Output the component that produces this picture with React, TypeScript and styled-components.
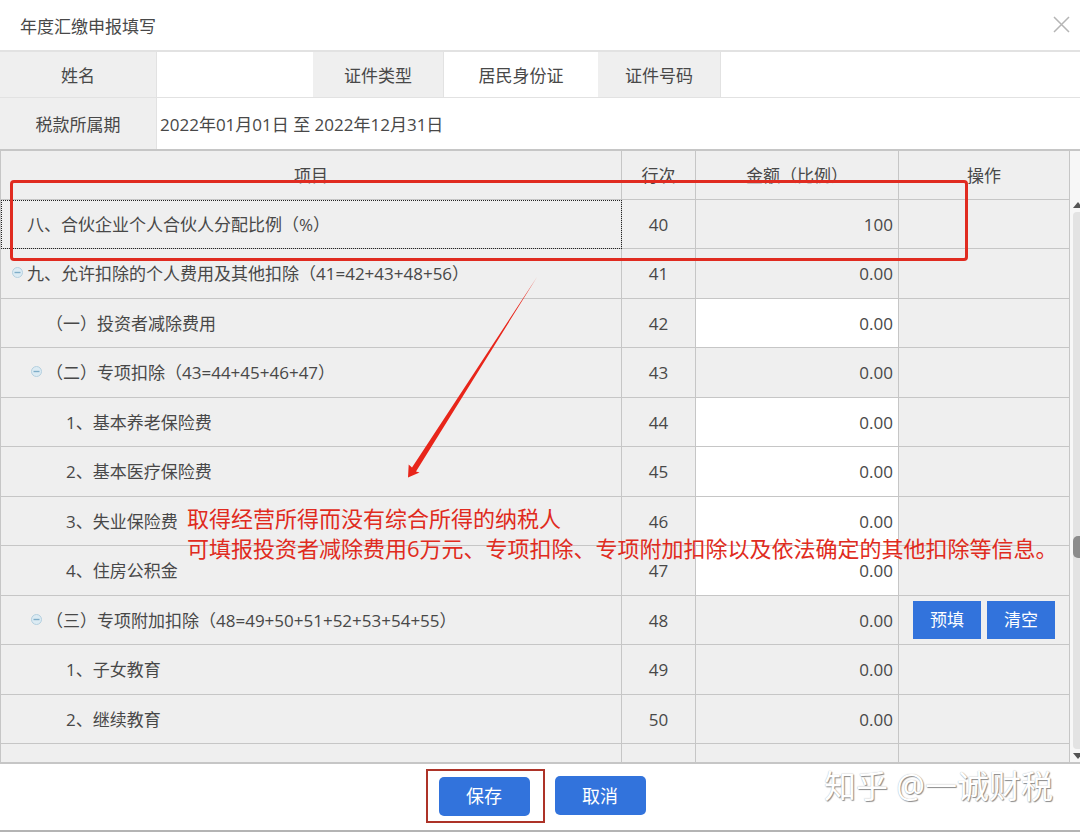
import React from "react";
import styled, { createGlobalStyle } from "styled-components";

const GlobalStyle = createGlobalStyle`
  *, *::before, *::after { box-sizing: border-box; }
  body {
    margin: 0;
    background: #fff;
    color: #484848;
    font: 17px/24px "Open Sans", "Noto Sans CJK SC", sans-serif;
  }
  button, input { font: inherit; color: inherit; }
`;

const line = "#c6c6c6";
const softLine = "#e2e2e2";
const panel = "#efefef";
const red = "#e02b20";

const Dialog = styled.main`
  position: relative;
  display: flex;
  flex-direction: column;
  height: 100vh;
  min-height: 400px;
  overflow: hidden;
  border-bottom: 2px solid #b4b4b4;
`;

const TitleBar = styled.header`
  display: flex;
  flex: none;
  align-items: center;
  justify-content: space-between;
  height: 52px;
  padding: 0 10px 0 20px;
  border-bottom: 2px solid ${softLine};
`;

const Title = styled.h1`
  margin: 0;
  padding-top: 4px;
  font-size: 17px;
  font-weight: 400;
`;

const CloseButton = styled.button`
  display: flex;
  padding: 0 0 2px;
  border: 0;
  background: none;
  color: #b5b5b5;
`;

const Info = styled.dl`
  display: grid;
  flex: none;
  grid-template-columns: 157px 156px 131px 154px 123px 1fr;
  margin: 0;
`;

const InfoLabel = styled.dt<{ $tall?: boolean }>`
  display: flex;
  align-items: center;
  justify-content: center;
  height: ${(p) => (p.$tall ? 51 : 46)}px;
  padding-top: 2px;
  border-right: 1px solid ${softLine};
  border-bottom: ${(p) => (p.$tall ? 0 : 1)}px solid ${softLine};
  background: ${panel};
`;

const InfoValue = styled.dd<{ $wide?: boolean }>`
  display: flex;
  align-items: center;
  justify-content: ${(p) => (p.$wide ? "flex-start" : "center")};
  margin: 0;
  padding: 2px 3px 0;
  grid-column: ${(p) => (p.$wide ? "span 5" : "auto")};
  border-bottom: ${(p) => (p.$wide ? 0 : 1)}px solid ${softLine};
`;

const Sheet = styled.section`
  position: relative;
  display: flex;
  flex: 1;
  min-height: 0;
  border-top: 2px solid ${line};
  border-bottom: 2px solid ${line};
`;

const TableClip = styled.div`
  flex: 1;
  overflow: hidden;
  background: ${panel};
`;

const Table = styled.table`
  width: 100%;
  table-layout: fixed;
  border-collapse: separate;
  border-spacing: 0;
  border-left: 1px solid ${line};
`;

const Col = styled.col<{ $w?: number }>`
  width: ${(p) => (p.$w ? `${p.$w}px` : "auto")};
`;

const Th = styled.th`
  height: 49px;
  padding: 2px 0 0;
  border-right: 1px solid ${line};
  border-bottom: 1px solid ${line};
  font-weight: 400;
`;

const Row = styled.tr`
  height: 49px;
  &:nth-child(even) { height: 50px; }
`;

const Cell = styled.td<{ $align?: string; $editable?: boolean }>`
  padding: 1px 5px 0;
  border-right: 1px solid ${line};
  border-bottom: 1px solid ${line};
  background: ${(p) => (p.$editable ? "#fff" : "transparent")};
  text-align: ${(p) => p.$align || "left"};
`;

const indents = [26, 45, 65];

const NameCell = styled(Cell)<{ $level: number; $focused?: boolean }>`
  position: relative;
  padding-left: ${(p) => indents[p.$level]}px;
  outline: ${(p) => (p.$focused ? "1px dotted #222" : "none")};
  outline-offset: -1px;
`;

const Toggle = styled.button<{ $level: number }>`
  position: absolute;
  left: ${(p) => (p.$level ? 29 : 10)}px;
  top: 17px;
  display: flex;
  padding: 0;
  border: 0;
  background: none;
`;

const AmountInput = styled.input`
  display: block;
  width: 100%;
  padding: 0;
  border: 0;
  outline: 0;
  background: transparent;
  text-align: right;
`;

const Actions = styled.div`
  display: flex;
  justify-content: center;
  gap: 6px;
  padding-bottom: 2px;
`;

const ActionButton = styled.button`
  width: 68px;
  height: 38px;
  padding: 0;
  border: 0;
  background: #3273dc;
  color: #fff;
`;

const Scrollbar = styled.div`
  display: flex;
  flex: none;
  flex-direction: column;
  width: 10px;
  padding: 51px 0 3px 3px;
  background: #f7f7f7;
`;

const Track = styled.div`
  display: flex;
  flex: 1;
  align-items: center;
  margin: 4px 0;
  border-radius: 4px 0 0 4px;
  background: #e3e3e3;
`;

const Thumb = styled.div`
  width: 100%;
  height: 22px;
  margin-top: 132px;
  border-radius: 5px 0 0 5px;
  background: #8c8c8c;
`;

const Footer = styled.footer`
  display: flex;
  flex: none;
  align-items: center;
  justify-content: center;
  gap: 10px;
  height: 66px;
  padding: 0 9px 3px 0;
`;

const SaveFrame = styled.div`
  padding: 6px 13px 5px 11px;
  border: 2px solid #ad3328;
`;

const FooterButton = styled.button`
  display: block;
  width: 91px;
  height: 39px;
  padding: 0;
  border: 0;
  border-radius: 5px;
  background: #3273dc;
  color: #fff;
  font-size: 18px;
`;

const HighlightFrame = styled.div`
  position: absolute;
  top: 29px;
  right: 112px;
  left: 10px;
  height: 81px;
  border: 3px solid ${red};
  border-radius: 4px;
  pointer-events: none;
`;

const Arrow = styled.svg`
  position: absolute;
  top: 126px;
  left: 406px;
  pointer-events: none;
`;

const Note = styled.p`
  position: absolute;
  top: 352px;
  left: 187px;
  margin: 0;
  color: ${red};
  font-size: 22px;
  line-height: 30px;
  white-space: nowrap;
  pointer-events: none;
`;

const Watermark = styled.div`
  position: absolute;
  right: 27px;
  bottom: 22px;
  color: #fff;
  font-size: 32px;
  line-height: 44px;
  text-shadow: 1px 1px 1px #8a8a8a, 0 0 1px #aaa;
`;

type Item = {
  no: number;
  name: string;
  level: number;
  amount?: string;
  parent?: boolean;
  editable?: boolean;
  actions?: string[];
};

const items: Item[] = [
  { no: 40, name: "八、合伙企业个人合伙人分配比例（%）", level: 0, amount: "100" },
  { no: 41, name: "九、允许扣除的个人费用及其他扣除（41=42+43+48+56）", level: 0, parent: true },
  { no: 42, name: "（一）投资者减除费用", level: 1, editable: true },
  { no: 43, name: "（二）专项扣除（43=44+45+46+47）", level: 1, parent: true },
  { no: 44, name: "1、基本养老保险费", level: 2, editable: true },
  { no: 45, name: "2、基本医疗保险费", level: 2, editable: true },
  { no: 46, name: "3、失业保险费", level: 2, editable: true },
  { no: 47, name: "4、住房公积金", level: 2, editable: true },
  { no: 48, name: "（三）专项附加扣除（48=49+50+51+52+53+54+55）", level: 1, parent: true, actions: ["预填", "清空"] },
  { no: 49, name: "1、子女教育", level: 2 },
  { no: 50, name: "2、继续教育", level: 2 },
];

const ItemRow = ({ item }: { item: Item }) => {
  const amount = item.amount || "0.00";
  return (
    <Row>
      <NameCell $level={item.level} $focused={item.no === 40}>
        {item.parent && (
          <Toggle $level={item.level} aria-label="收起">
            <svg width="13" height="13" viewBox="0 0 13 13" fill="#dcebf3" stroke="#b4d0df">
              <circle cx="6.5" cy="6.5" r="5" />
              <path d="M3.5 6.5h6" stroke="#7fadc8" strokeWidth="1.4" />
            </svg>
          </Toggle>
        )}
        {item.name}
      </NameCell>
      <Cell $align="center">{item.no}</Cell>
      <Cell $align="right" $editable={item.editable}>
        {item.editable ? <AmountInput aria-label={item.name} defaultValue={amount} /> : amount}
      </Cell>
      <Cell>
        {item.actions && (
          <Actions>
            {item.actions.map((label) => (
              <ActionButton key={label}>{label}</ActionButton>
            ))}
          </Actions>
        )}
      </Cell>
    </Row>
  );
};

export default function App() {
  return (
    <>
      <GlobalStyle />
      <Dialog>
        <TitleBar>
          <Title>年度汇缴申报填写</Title>
          <CloseButton aria-label="关闭">
            <svg width="17" height="17" viewBox="0 0 17 17" fill="none" stroke="currentColor" strokeWidth="1.5">
              <path d="M1 1l15 15M16 1L1 16" />
            </svg>
          </CloseButton>
        </TitleBar>
        <Info>
          <InfoLabel>姓名</InfoLabel>
          <InfoValue />
          <InfoLabel>证件类型</InfoLabel>
          <InfoValue>居民身份证</InfoValue>
          <InfoLabel>证件号码</InfoLabel>
          <InfoValue />
          <InfoLabel $tall>税款所属期</InfoLabel>
          <InfoValue $wide>2022年01月01日 至 2022年12月31日</InfoValue>
        </Info>
        <Sheet>
          <TableClip>
            <Table>
              <colgroup>
                <Col />
                <Col $w={74} />
                <Col $w={203} />
                <Col $w={171} />
              </colgroup>
              <thead>
                <tr>
                  <Th>项目</Th>
                  <Th>行次</Th>
                  <Th>金额（比例）</Th>
                  <Th>操作</Th>
                </tr>
              </thead>
              <tbody>
                {items.map((item) => (
                  <ItemRow key={item.no} item={item} />
                ))}
                <Row>
                  <Cell />
                  <Cell />
                  <Cell />
                  <Cell />
                </Row>
              </tbody>
            </Table>
          </TableClip>
          <Scrollbar>
            <svg width="7" height="6" viewBox="0 0 7 6" fill="#555">
              <path d="M0 6L5 0l2 2.4V6z" />
            </svg>
            <Track>
              <Thumb />
            </Track>
            <svg width="7" height="6" viewBox="0 0 7 6" fill="#555">
              <path d="M0 0L5 6l2-2.4V0z" />
            </svg>
          </Scrollbar>
          <HighlightFrame />
          <Arrow width="134" height="202" viewBox="0 0 134 202" fill="#e8251a">
            <path d="M131 0L10 194.500L13.500 195.500L2 200.500L2.700 187.500L6 190.500z" />
          </Arrow>
          <Note>
            取得经营所得而没有综合所得的纳税人
            <br />
            可填报投资者减除费用6万元、专项扣除、专项附加扣除以及依法确定的其他扣除等信息。
          </Note>
        </Sheet>
        <Footer>
          <SaveFrame>
            <FooterButton>保存</FooterButton>
          </SaveFrame>
          <FooterButton>取消</FooterButton>
        </Footer>
        <Watermark>知乎 @一诚财税</Watermark>
      </Dialog>
    </>
  );
}
